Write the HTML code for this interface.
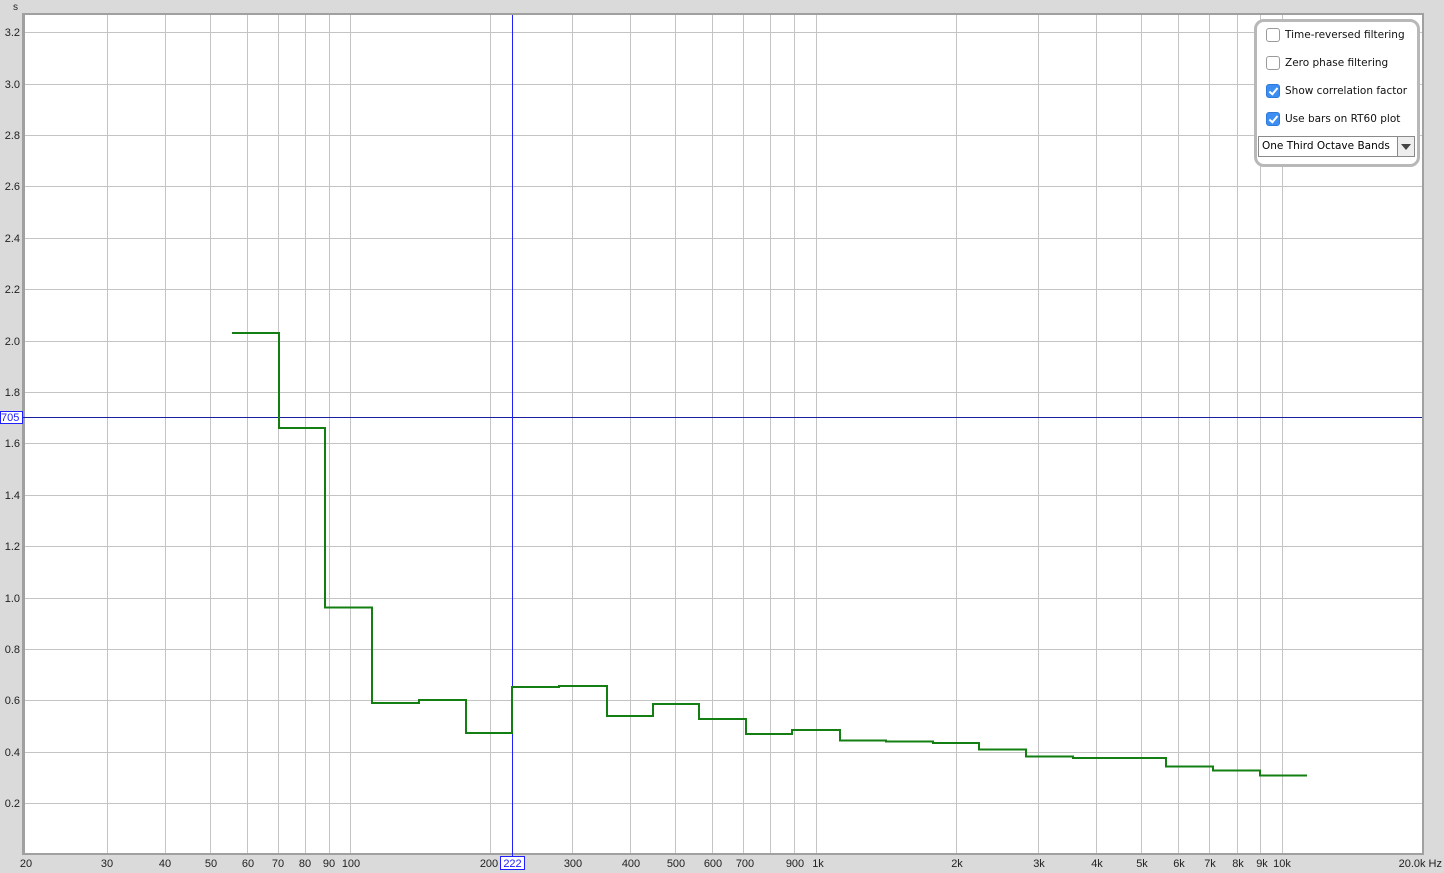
<!DOCTYPE html>
<html><head><meta charset="utf-8"><style>
html,body{margin:0;padding:0;background:#dadada;}
body{width:1444px;height:873px;overflow:hidden;position:relative;font-family:"Liberation Sans",sans-serif;}
svg text{font-family:"Liberation Sans",sans-serif;font-size:11px;fill:#222;}
.lg{position:absolute;left:1254px;top:19px;width:160px;height:142px;border:3px solid #b8b8b8;border-radius:10px;background:#fff;}
.row{position:absolute;left:9px;font-size:10.5px;color:#111;white-space:nowrap;font-family:"DejaVu Sans",sans-serif;}
.cb{position:absolute;left:0;top:0;width:12px;height:12px;border:1px solid #9a9a9a;border-radius:3px;background:#fff;}
.cb.on{background:#3c8ef3;border-color:#2f7ad8;}
.cb.on:after{content:"";position:absolute;left:4px;top:1px;width:3px;height:7px;border:solid #fff;border-width:0 2px 2px 0;transform:rotate(40deg);}
.row span{position:absolute;left:19px;top:1px;}
.sel{position:absolute;left:1px;top:114px;width:155px;height:19px;border:1px solid #8a8a8a;background:#fff;font-size:10.5px;font-family:"DejaVu Sans",sans-serif;}
.sel span{position:absolute;left:3px;top:3px;}
.sel .ar{position:absolute;right:0;top:0;width:16px;height:19px;border-left:1px solid #8a8a8a;background:#eee;}
.sel .ar:after{content:"";position:absolute;left:3px;top:7px;border-left:5px solid transparent;border-right:5px solid transparent;border-top:6px solid #444;}
</style></head><body>
<svg width="1444" height="873" style="position:absolute;left:0;top:0">
<rect x="22" y="13" width="1402" height="842" fill="#a0a0a0"/>
<rect x="25" y="15" width="1397" height="838" fill="#fff"/>
<g stroke="#c4c4c4" stroke-width="1">
<line x1="25" x2="1422" y1="32.5" y2="32.5"/><line x1="25" x2="1422" y1="84.5" y2="84.5"/><line x1="25" x2="1422" y1="135.5" y2="135.5"/><line x1="25" x2="1422" y1="186.5" y2="186.5"/><line x1="25" x2="1422" y1="238.5" y2="238.5"/><line x1="25" x2="1422" y1="289.5" y2="289.5"/><line x1="25" x2="1422" y1="341.5" y2="341.5"/><line x1="25" x2="1422" y1="392.5" y2="392.5"/><line x1="25" x2="1422" y1="443.5" y2="443.5"/><line x1="25" x2="1422" y1="495.5" y2="495.5"/><line x1="25" x2="1422" y1="546.5" y2="546.5"/><line x1="25" x2="1422" y1="598.5" y2="598.5"/><line x1="25" x2="1422" y1="649.5" y2="649.5"/><line x1="25" x2="1422" y1="700.5" y2="700.5"/><line x1="25" x2="1422" y1="752.5" y2="752.5"/><line x1="25" x2="1422" y1="803.5" y2="803.5"/>
<line y1="15" y2="853" x1="107.5" x2="107.5"/><line y1="15" y2="853" x1="165.5" x2="165.5"/><line y1="15" y2="853" x1="210.5" x2="210.5"/><line y1="15" y2="853" x1="247.5" x2="247.5"/><line y1="15" y2="853" x1="278.5" x2="278.5"/><line y1="15" y2="853" x1="305.5" x2="305.5"/><line y1="15" y2="853" x1="329.5" x2="329.5"/><line y1="15" y2="853" x1="350.5" x2="350.5"/><line y1="15" y2="853" x1="490.5" x2="490.5"/><line y1="15" y2="853" x1="572.5" x2="572.5"/><line y1="15" y2="853" x1="630.5" x2="630.5"/><line y1="15" y2="853" x1="675.5" x2="675.5"/><line y1="15" y2="853" x1="712.5" x2="712.5"/><line y1="15" y2="853" x1="743.5" x2="743.5"/><line y1="15" y2="853" x1="770.5" x2="770.5"/><line y1="15" y2="853" x1="794.5" x2="794.5"/><line y1="15" y2="853" x1="816.5" x2="816.5"/><line y1="15" y2="853" x1="956.5" x2="956.5"/><line y1="15" y2="853" x1="1038.5" x2="1038.5"/><line y1="15" y2="853" x1="1096.5" x2="1096.5"/><line y1="15" y2="853" x1="1141.5" x2="1141.5"/><line y1="15" y2="853" x1="1178.5" x2="1178.5"/><line y1="15" y2="853" x1="1209.5" x2="1209.5"/><line y1="15" y2="853" x1="1237.5" x2="1237.5"/><line y1="15" y2="853" x1="1260.5" x2="1260.5"/><line y1="15" y2="853" x1="1282.5" x2="1282.5"/>
</g>
<line x1="22" x2="1422" y1="417.5" y2="417.5" stroke="#1c1ca0" stroke-width="1"/>
<line x1="512.5" x2="512.5" y1="15" y2="856" stroke="#2020ff" stroke-width="1"/>
<path fill="none" stroke="#137f13" stroke-width="2" d="M232 333 H279 V428 H325 V607.5 H372 V703 H419 V700 H466 V733 H512 V687 H559 V686 H607 V716 H653 V704 H699 V719 H746 V734 H792 V730 H840 V740.5 H886 V741.5 H933 V743 H979 V749.5 H1026 V756.5 H1073 V758 H1166 V766.5 H1213 V770.5 H1260 V775.5 H1307"/>
<g text-anchor="end">
<text x="20" y="36">3.2</text><text x="20" y="88">3.0</text><text x="20" y="139">2.8</text><text x="20" y="190">2.6</text><text x="20" y="242">2.4</text><text x="20" y="293">2.2</text><text x="20" y="345">2.0</text><text x="20" y="396">1.8</text><text x="20" y="447">1.6</text><text x="20" y="499">1.4</text><text x="20" y="550">1.2</text><text x="20" y="602">1.0</text><text x="20" y="653">0.8</text><text x="20" y="704">0.6</text><text x="20" y="756">0.4</text><text x="20" y="807">0.2</text>
</g>
<text x="13" y="10" style="font-size:10px">s</text>
<rect x="0.5" y="411.5" width="22" height="12" fill="#fff" stroke="#2020ff"/>
<text x="1" y="421" style="fill:#2020ff">705</text>
<g text-anchor="middle">
<text x="26" y="867">20</text><text x="107" y="867">30</text><text x="165" y="867">40</text><text x="211" y="867">50</text><text x="248" y="867">60</text><text x="278" y="867">70</text><text x="305" y="867">80</text><text x="329" y="867">90</text><text x="351" y="867">100</text><text x="489" y="867">200</text><text x="573" y="867">300</text><text x="631" y="867">400</text><text x="676" y="867">500</text><text x="713" y="867">600</text><text x="745" y="867">700</text><text x="795" y="867">900</text><text x="818" y="867">1k</text><text x="957" y="867">2k</text><text x="1039" y="867">3k</text><text x="1097" y="867">4k</text><text x="1142" y="867">5k</text><text x="1179" y="867">6k</text><text x="1210" y="867">7k</text><text x="1238" y="867">8k</text><text x="1262" y="867">9k</text><text x="1282" y="867">10k</text>
</g>
<text x="1442" y="867" text-anchor="end">20.0k Hz</text>
<rect x="500.5" y="856.5" width="24" height="13" fill="#fff" stroke="#2020ff"/>
<text x="512.5" y="867" text-anchor="middle" style="fill:#2020ff">222</text>
</svg>
<div class="lg">
<div class="row" style="top:6px"><div class="cb"></div><span>Time-reversed filtering</span></div>
<div class="row" style="top:34px"><div class="cb"></div><span>Zero phase filtering</span></div>
<div class="row" style="top:62px"><div class="cb on"></div><span>Show correlation factor</span></div>
<div class="row" style="top:90px"><div class="cb on"></div><span>Use bars on RT60 plot</span></div>
<div class="sel"><span>One Third Octave Bands</span><div class="ar"></div></div>
</div>
</body></html>
